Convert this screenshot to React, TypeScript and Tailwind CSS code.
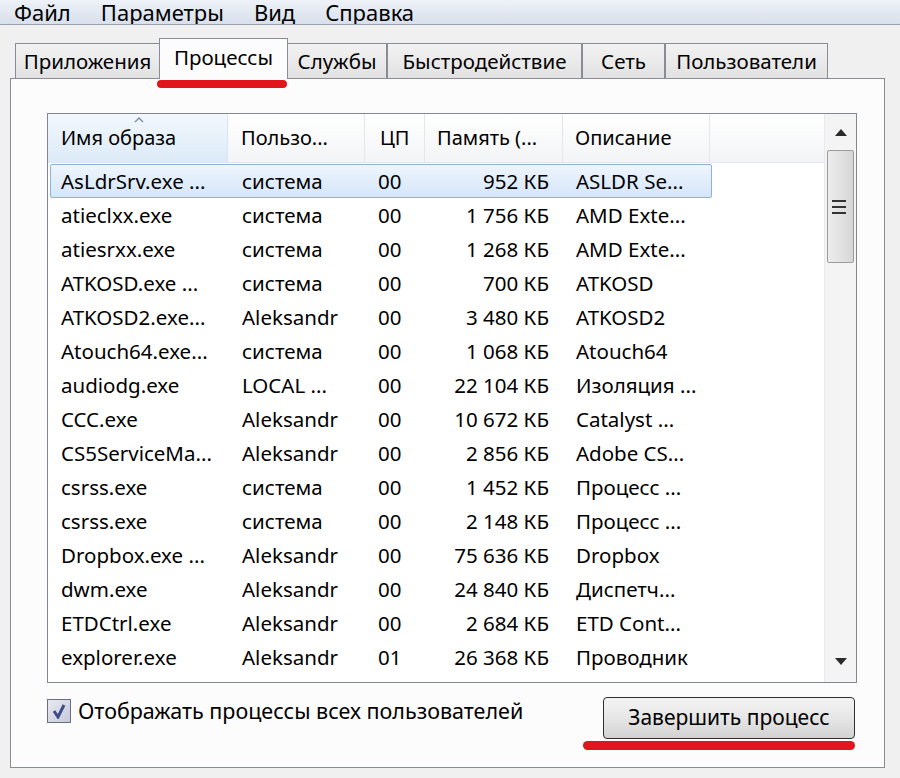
import React from "react";

const rows = [
  ["AsLdrSrv.exe ...", "система", "00", "952 КБ", "ASLDR Se..."],
  ["atieclxx.exe", "система", "00", "1 756 КБ", "AMD Exte..."],
  ["atiesrxx.exe", "система", "00", "1 268 КБ", "AMD Exte..."],
  ["ATKOSD.exe ...", "система", "00", "700 КБ", "ATKOSD"],
  ["ATKOSD2.exe...", "Aleksandr", "00", "3 480 КБ", "ATKOSD2"],
  ["Atouch64.exe...", "система", "00", "1 068 КБ", "Atouch64"],
  ["audiodg.exe", "LOCAL ...", "00", "22 104 КБ", "Изоляция ..."],
  ["CCC.exe", "Aleksandr", "00", "10 672 КБ", "Catalyst ..."],
  ["CS5ServiceMa...", "Aleksandr", "00", "2 856 КБ", "Adobe CS..."],
  ["csrss.exe", "система", "00", "1 452 КБ", "Процесс ..."],
  ["csrss.exe", "система", "00", "2 148 КБ", "Процесс ..."],
  ["Dropbox.exe ...", "Aleksandr", "00", "75 636 КБ", "Dropbox"],
  ["dwm.exe", "Aleksandr", "00", "24 840 КБ", "Диспетч..."],
  ["ETDCtrl.exe", "Aleksandr", "00", "2 684 КБ", "ETD Cont..."],
  ["explorer.exe", "Aleksandr", "01", "26 368 КБ", "Проводник"],
];

// tab label + width taken from the screenshot
const tabs: [string, string][] = [
  ["Приложения", "w-[145px]"],
  ["Процессы", "w-[129px]"],
  ["Службы", "w-[100px]"],
  ["Быстродействие", "w-[195px]"],
  ["Сеть", "w-[83px]"],
  ["Пользователи", "w-[163px]"],
];

function Row({ r, sel }: { r: string[]; sel: boolean }) {
  return (
    <div
      className={
        "flex h-[34px] items-center w-[662px] ml-[2px] whitespace-nowrap " +
        (sel ? "bg-gradient-to-b from-[#eef5fd] to-[#d5e6fa] border border-[#8fb2dc] rounded-[2px]" : "border border-transparent")
      }
    >
      <div className="w-[178px] pl-[10px] overflow-hidden">{r[0]}</div>
      <div className="w-[137px] pl-[13px]">{r[1]}</div>
      <div className="w-[60px] pl-[12px]">{r[2]}</div>
      <div className="w-[138px] pr-[15px] text-right">{r[3]}</div>
      <div className="w-[147px] pl-[12px]">{r[4]}</div>
    </div>
  );
}

export default function App() {
  return (
    <div
      className="relative w-[900px] h-[778px] bg-[#f0f0f0] overflow-hidden text-black"
      style={{ fontFamily: '"Noto Sans", "Open Sans", sans-serif' }}
    >
      {/* menu */}
      <div className="h-[25px] bg-gradient-to-b from-[#eef2f8] to-[#d8e0ec] border-b border-[#9aa3ad] flex items-start pl-[14px] gap-[30px] text-[22px] leading-[24px] overflow-hidden">
        <span>Файл</span>
        <span>Параметры</span>
        <span>Вид</span>
        <span>Справка</span>
      </div>

      <div className="pl-[10px] pr-[15px] pt-[13px]">
        {/* tabs */}
        <div className="flex items-end pl-[5px] h-[40px] text-[20.5px] whitespace-nowrap">
          {tabs.map(([t, w], i) =>
            i === 1 ? (
              <div
                key={t}
                className={w + " h-[41px] -mb-px z-10 bg-[#fcfcfc] border border-b-0 border-[#898c95] flex justify-center items-start pt-[3px] -mx-[1px]"}
              >
                {t}
              </div>
            ) : (
              <div
                key={t}
                className={w + " h-[35px] bg-gradient-to-b from-[#f2f2f2] to-[#e2e2e2] border border-b-0 border-[#898c95] flex justify-center items-center"}
              >
                {t}
              </div>
            )
          )}
        </div>

        {/* panel */}
        <div className="h-[690px] bg-[#fcfcfc] border border-[#898c95] pl-[36px] pt-[34px] pr-[27px]">
          <div className="h-[570px] border border-[#828790] bg-white flex text-[20.5px]">
            <div className="flex-1 flex flex-col">
              {/* header */}
              <div className="h-[49px] flex border-b border-[#e3e6ea] text-[20px]">
                <div className="relative w-[180px] pl-[13px] flex items-center bg-gradient-to-b from-[#f2f8fd] to-[#dceaf7] border-r border-[#d6e5f5]">
                  <span>Имя образа</span>
                  <svg className="absolute left-[86px] top-[3px]" width="10" height="6" viewBox="0 0 10 6">
                    <path d="M1 5 L5 1 L9 5" fill="none" stroke="#7a8aa0" strokeWidth="1.4" />
                  </svg>
                </div>
                <div className="w-[137px] pl-[13px] flex items-center bg-gradient-to-b from-white to-[#f3f4f6] border-r border-[#e3e6ea]">
                  Пользо...
                </div>
                <div className="w-[60px] pl-[15px] flex items-center bg-gradient-to-b from-white to-[#f3f4f6] border-r border-[#e3e6ea]">
                  ЦП
                </div>
                <div className="w-[138px] pl-[12px] flex items-center bg-gradient-to-b from-white to-[#f3f4f6] border-r border-[#e3e6ea] whitespace-nowrap overflow-hidden">
                  Память (...
                </div>
                <div className="w-[147px] pl-[12px] flex items-center bg-gradient-to-b from-white to-[#f3f4f6] border-r border-[#e3e6ea]">
                  Описание
                </div>
                <div className="flex-1 bg-gradient-to-b from-white to-[#f3f4f6]" />
              </div>
              <div className="pt-px">
                {rows.map((r, i) => (
                  <Row key={i} r={r} sel={i === 0} />
                ))}
              </div>
            </div>

            {/* scrollbar */}
            <div className="w-[32px] bg-[#f4f4f4] border-l border-[#eaeaea] flex flex-col">
              <div className="h-[36px] flex items-center justify-center">
                <svg width="12" height="7" viewBox="0 0 12 7">
                  <path d="M0 7 L6 0 L12 7 Z" fill="#2a2a2a" />
                </svg>
              </div>
              <div className="mx-[2px] h-[113px] border border-[#9c9c9c] rounded-[2px] bg-gradient-to-r from-[#ececec] via-[#e2e2e2] to-[#d6d6d6] flex flex-col items-center justify-center gap-[4px] pr-[3px]">
                <div className="w-[14px] h-[2px] bg-[#333]" />
                <div className="w-[14px] h-[2px] bg-[#333]" />
                <div className="w-[14px] h-[2px] bg-[#333]" />
              </div>
              <div className="flex-1" />
              <div className="h-[28px] flex items-start justify-center pt-[4px]">
                <svg width="12" height="7" viewBox="0 0 12 7">
                  <path d="M0 0 L12 0 L6 7 Z" fill="#2a2a2a" />
                </svg>
              </div>
            </div>
          </div>

          {/* bottom controls */}
          <div className="flex items-start justify-between mt-[14px]">
            <div className="flex items-center gap-[7px] pt-[2px] text-[21.5px]">
              <div className="w-[24px] h-[24px] border border-[#6b6f78] bg-gradient-to-br from-[#e8eaf2] to-[#c6cad8] flex items-center justify-center">
                <svg width="16" height="16" viewBox="0 0 16 16">
                  <path d="M3 8 L7 14 L13 2" fill="none" stroke="#3f4e8a" strokeWidth="3" />
                </svg>
              </div>
              <span className="leading-[24px]">Отображать процессы всех пользователей</span>
            </div>
            <div className="w-[252px] h-[42px] border border-[#303030] rounded-[4px] bg-gradient-to-b from-[#f4f4f4] via-[#e6e6e6] to-[#d2d2d2] flex items-center justify-center text-[21px] mr-[2px]">
              Завершить процесс
            </div>
          </div>
        </div>
      </div>

      {/* red annotation underlines */}
      <div className="absolute left-[157px] top-[80px] w-[130px] h-[8px] rounded-full bg-[#e0161c]" />
      <div className="absolute left-[583px] top-[741px] w-[272px] h-[9px] rounded-full bg-[#e0161c]" />
    </div>
  );
}
